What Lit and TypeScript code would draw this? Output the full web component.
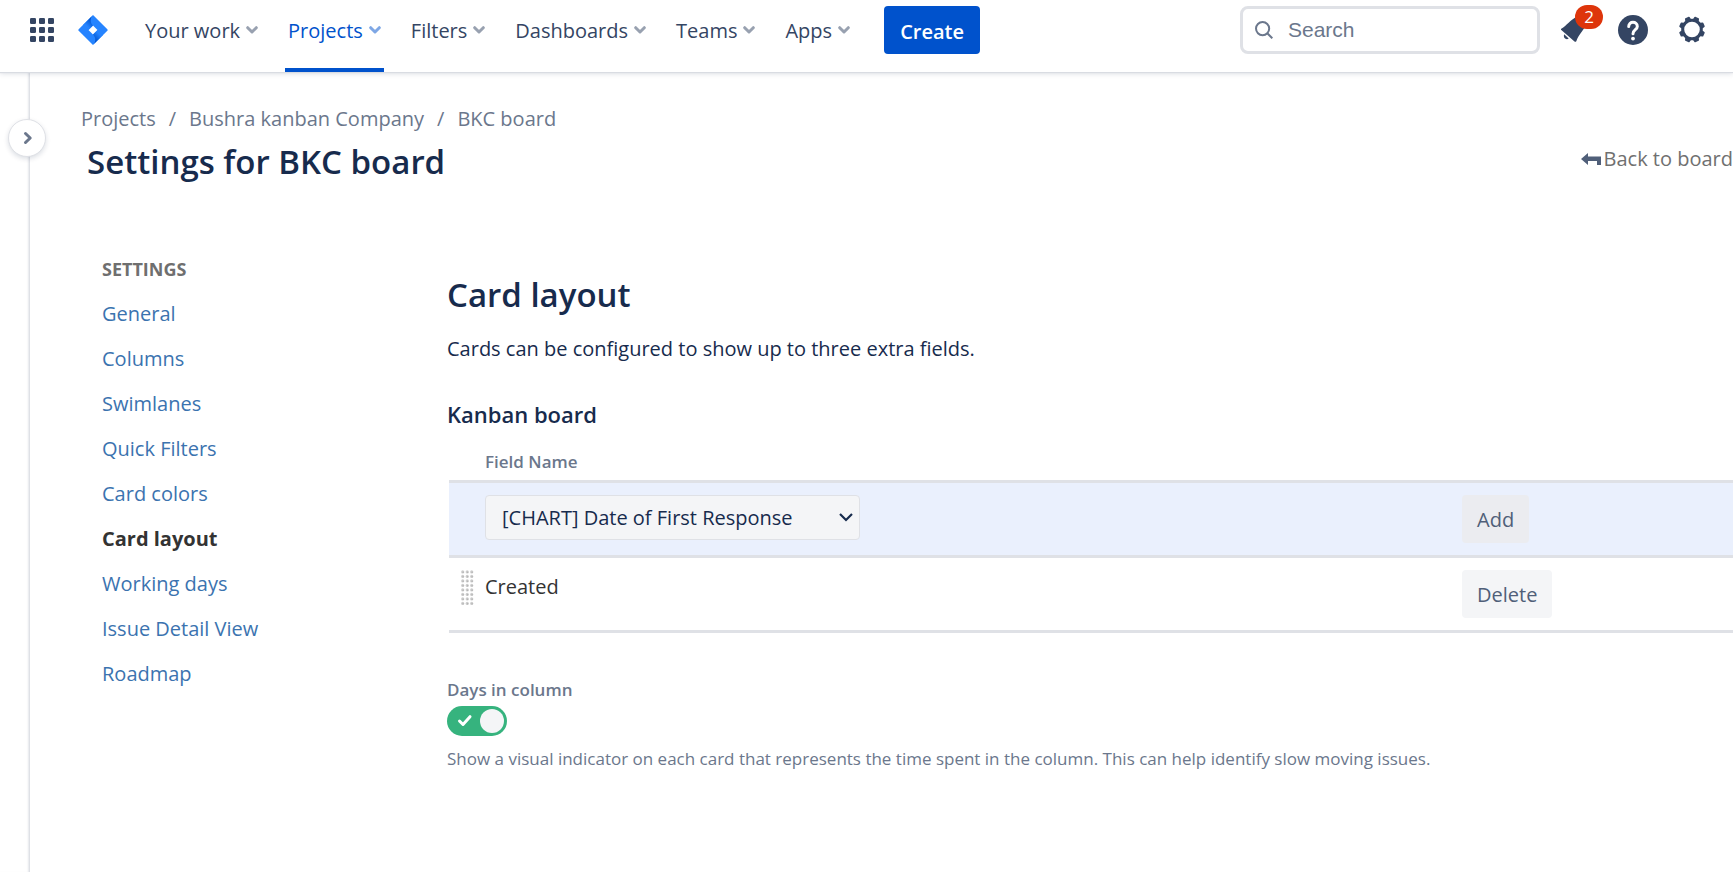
import { LitElement, html, svg, css } from "lit";
import { customElement, property, state } from "lit/decorators.js";
import { classMap } from "lit/directives/class-map.js";

const chevron = html`<svg class="chevron" width="12" height="8" viewBox="0 0 12 8" aria-hidden="true">
  <path d="M1.7 1.7 6 6 10.3 1.7" fill="none" stroke="currentColor" stroke-width="3" stroke-linecap="round" stroke-linejoin="round" />
</svg>`;

@customElement("top-bar")
export class TopBar extends LitElement {
  @property() active = "Projects";

  static styles = css`
    :host {
      display: block;
      position: relative;
      z-index: 2;
    }
    .bar {
      display: flex;
      align-items: flex-start;
      height: 72px;
      padding: 0 26px 0 27px;
      box-sizing: border-box;
      background: #fff;
      box-shadow: 0 1px 1px #d9dce2, 0 2px 5px rgba(9, 30, 66, 0.13);
    }
    button,
    a {
      font: inherit;
      color: #344563;
    }
    button {
      border: 0;
      background: none;
      padding: 0;
      cursor: pointer;
    }
    svg {
      display: block;
    }
    .switcher {
      margin: 15px 21px 0 0;
    }
    .logo {
      margin: 15px 34px 0 0;
    }
    .menu {
      display: flex;
      gap: 24px;
      height: 72px;
    }
    .item {
      display: flex;
      align-items: center;
      gap: 6px;
      padding: 0 3px 8px;
      border-bottom: 4px solid transparent;
      border-radius: 2px 2px 0 0;
      font-weight: 500;
      white-space: nowrap;
    }
    .item .chevron {
      opacity: 0.5;
    }
    .item.active {
      color: #0052cc;
      border-bottom-color: #0052cc;
    }
    .create {
      height: 48px;
      margin: 6px 0 0 31px;
      padding: 2px 16px 0;
      border-radius: 4px;
      background: #0052cc;
      color: #fff;
      font-weight: 600;
    }
    .search {
      display: flex;
      align-items: center;
      gap: 15px;
      width: 300px;
      height: 48px;
      margin: 6px 21px 0 auto;
      padding: 0 12px;
      box-sizing: border-box;
      border: 3px solid #dfe1e6;
      border-radius: 8px;
      color: #6b778c;
    }
    .search input {
      flex: 1;
      min-width: 0;
      border: 0;
      padding: 0;
      outline: 0;
      background: none;
      font: 21px "Liberation Sans", Arial, sans-serif;
      color: #172b4d;
    }
    .search input::placeholder {
      color: #6b778c;
      opacity: 1;
    }
    .tools {
      display: flex;
      margin-top: 15px;
    }
    .bell {
      position: relative;
      width: 30px;
      height: 30px;
      margin-right: 27px;
    }
    .badge {
      position: absolute;
      left: 14px;
      top: -10px;
      width: 28px;
      height: 24px;
      border-radius: 12px;
      background: #de350b;
      color: #fff;
      font-size: 17px;
      line-height: 24px;
      text-align: center;
    }
    .help {
      margin-right: 29px;
    }
  `;

  render() {
    const cells = [3, 12, 21];
    const items = ["Your work", "Projects", "Filters", "Dashboards", "Teams", "Apps"];
    return html`<header class="bar">
      <button class="switcher" aria-label="Switch to">
        <svg width="30" height="30" viewBox="0 0 30 30" fill="#344563">
          ${cells.map((y) => cells.map((x) => svg`<rect x=${x} y=${y} width="6" height="6" rx="1.3" />`))}
        </svg>
      </button>
      <a class="logo" href="#" aria-label="Jira">
        <svg width="30" height="30" viewBox="0 0 30 30">
          <defs>
            <linearGradient id="upper" x1="15" y1="5" x2="9" y2="11" gradientUnits="userSpaceOnUse">
              <stop offset="0.1" stop-color="#0052cc" /><stop offset="1" stop-color="#2684ff" />
            </linearGradient>
            <linearGradient id="lower" x1="15" y1="25" x2="21" y2="19" gradientUnits="userSpaceOnUse">
              <stop offset="0.1" stop-color="#0052cc" /><stop offset="1" stop-color="#2684ff" />
            </linearGradient>
          </defs>
          <path fill="#2684ff" fill-rule="evenodd" d="M15 0 29.3 14.2a1.1 1.1 0 0 1 0 1.6L15 30 .7 15.8a1.1 1.1 0 0 1 0-1.6ZM15 10.5 10.5 15 15 19.5 19.5 15Z" />
          <path fill="url(#upper)" d="M15 10.5C12 7.5 12 3.2 14.6.4L5 10l5.500 5Z" />
          <path fill="url(#lower)" d="M15 19.500c3 3 3 7.300.4 10.100L25 20l-5.500-5Z" />
        </svg>
      </a>
      <nav class="menu">
        ${items.map(
          (name) => html`<button class=${classMap({ item: true, active: name === this.active })} @click=${() => (this.active = name)}>
            ${name}${chevron}
          </button>`
        )}
      </nav>
      <button class="create">Create</button>
      <label class="search">
        <svg width="18" height="18" viewBox="0 0 18 18" fill="none" stroke="currentColor" stroke-width="2" aria-hidden="true">
          <circle cx="7.600" cy="7.600" r="6.600" /><path d="m12.300 12.300 5 5" />
        </svg>
        <input type="search" placeholder="Search" aria-label="Search" />
      </label>
      <div class="tools">
        <button class="bell" aria-label="Notifications">
          <svg width="30" height="30" viewBox="0 0 30 30" fill="#344563">
            <path d="M.2 13.700C6 10.500 9 5 16 1.500l9 9C21 17 17.500 20 15.300 26.200q-.8 1.200-1.800.2L.3 15.100q-.7-.8-.1-1.400Z" />
            <path d="M3.200 19.200 7.700 23.600C4.800 25.400 1.800 22.400 3.200 19.200Z" />
          </svg>
          <span class="badge">2</span>
        </button>
        <button class="help" aria-label="Help">
          <svg width="30" height="30" viewBox="0 0 30 30">
            <circle cx="15" cy="15" r="15" fill="#344563" />
            <path d="M10.700 11.600C10.700 5.800 19.300 6 19.300 11.500 19.300 14.700 15 14.700 15 18.700" fill="none" stroke="#fff" stroke-width="3" stroke-linecap="round" />
            <circle cx="15" cy="23.600" r="1.900" fill="#fff" />
          </svg>
        </button>
        <button aria-label="Settings">
          <svg width="30" height="30" viewBox="0 0 30 30" fill="none" stroke="#344563">
            <circle cx="15" cy="14.500" r="9.300" stroke-width="3" />
            ${[22.5, 67.5, 112.5, 157.5, 202.5, 247.5, 292.5, 337.5].map(
              (a) => svg`<path d="M12.800 4.300 13.300 2.300h3.400l.5 2Z" fill="#344563" stroke-width="1.600" stroke-linejoin="round" transform="rotate(${a} 15 14.500)" />`
            )}
          </svg>
        </button>
      </div>
    </header>`;
  }
}

@customElement("settings-nav")
export class SettingsNav extends LitElement {
  @property() current = "Card layout";

  static styles = css`
    :host {
      display: block;
    }
    h2 {
      margin: 0;
      font-size: 18px;
      line-height: 44px;
      font-weight: 700;
      color: #6f6f6f;
      text-transform: uppercase;
    }
    ul {
      margin: 0;
      padding: 0;
      list-style: none;
    }
    a {
      display: block;
      line-height: 45px;
      color: #3b73af;
      text-decoration: none;
    }
    a.current {
      color: #333;
      font-weight: 700;
    }
  `;

  render() {
    const pages = ["General", "Columns", "Swimlanes", "Quick Filters", "Card colors", "Card layout", "Working days", "Issue Detail View", "Roadmap"];
    return html`<nav aria-label="Settings">
      <h2>Settings</h2>
      <ul>
        ${pages.map((p) => html`<li><a href="#" class=${classMap({ current: p === this.current })}>${p}</a></li>`)}
      </ul>
    </nav>`;
  }
}

@customElement("card-layout")
export class CardLayout extends LitElement {
  @state() private daysInColumn = true;

  static styles = css`
    :host {
      display: block;
      color: #172b4d;
    }
    h2 {
      margin: 0;
      font-size: 33px;
      line-height: 48px;
      font-weight: 600;
    }
    p {
      margin: 0;
    }
    .intro {
      margin-top: 15px;
      line-height: 30px;
    }
    h3 {
      margin: 34px 0 0;
      font-size: 22px;
      line-height: 32px;
      font-weight: 600;
    }
    table {
      width: calc(100% - 2px);
      margin: 18px 0 0 2px;
      border-collapse: collapse;
      table-layout: fixed;
    }
    th {
      height: 27px;
      padding: 0 0 5px;
      text-align: left;
      font-size: 17px;
      line-height: 24px;
      font-weight: 600;
      color: #6b778c;
    }
    td {
      height: 48px;
      padding: 12px 0;
      border-top: 3px solid #dfe1e6;
      border-bottom: 3px solid #dfe1e6;
      vertical-align: top;
    }
    .grip-col {
      width: 36px;
    }
    .action-col {
      width: 271px;
    }
    .adding {
      background: #eaf0fd;
    }
    .picker {
      display: grid;
      width: 375px;
    }
    .picker > * {
      grid-area: 1 / 1;
    }
    .picker svg {
      place-self: center end;
      margin-right: 7px;
      pointer-events: none;
    }
    select {
      appearance: none;
      height: 45px;
      padding: 0 36px 0 16px;
      border: 1px solid #dfe1e6;
      border-radius: 4px;
      background: #f4f5f7;
      font: inherit;
      color: #172b4d;
    }
    .action {
      display: block;
      height: 48px;
      padding: 0 15px;
      border: 0;
      border-radius: 4px;
      background: #f4f5f7;
      font: inherit;
      color: #505f79;
    }
    .adding .action {
      background: #ebecf0;
    }
    .grip {
      display: block;
      margin-left: 12px;
    }
    .name {
      line-height: 34px;
      color: #333;
    }
    .toggle-label {
      display: block;
      margin-top: 45px;
      font-size: 17px;
      line-height: 24px;
      font-weight: 600;
      color: #6b778c;
    }
    .toggle {
      display: grid;
      width: 60px;
      height: 30px;
      margin-top: 4px;
    }
    .toggle > * {
      grid-area: 1 / 1;
    }
    .toggle input {
      appearance: none;
      width: 60px;
      height: 30px;
      margin: 0;
      border-radius: 15px;
      background: #6b778c;
    }
    .toggle input:checked {
      background: #36b37e;
    }
    .toggle svg {
      pointer-events: none;
    }
    .hint {
      margin-top: 11px;
      font-size: 17px;
      line-height: 24px;
      color: #6b778c;
    }
  `;

  render() {
    const rows = [0, 1, 2, 3, 4, 5, 6, 7];
    return html`
      <h2>Card layout</h2>
      <p class="intro">Cards can be configured to show up to three extra fields.</p>
      <h3>Kanban board</h3>
      <table>
        <colgroup><col class="grip-col" /><col /><col class="action-col" /></colgroup>
        <thead>
          <tr><th></th><th>Field Name</th><th></th></tr>
        </thead>
        <tbody>
          <tr class="adding">
            <td></td>
            <td>
              <div class="picker">
                <select aria-label="Field name"><option>[CHART] Date of First Response</option></select>
                <svg width="14" height="9" viewBox="0 0 14 9" fill="none" stroke="#172b4d" stroke-width="2.200" aria-hidden="true">
                  <path d="m1 1 6 6 6-6" />
                </svg>
              </div>
            </td>
            <td><button class="action">Add</button></td>
          </tr>
          <tr>
            <td>
              <svg class="grip" width="13" height="36" viewBox="0 0 13 36" aria-hidden="true">
                ${rows.map((r) =>
                  [0, 1, 2].map(
                    (c) => svg`<circle cx=${1.7 + c * 4.5} cy=${1.9 + r * 4.5} r="1.600" fill="#cecece" /><circle cx=${2.1 + c * 4.5} cy=${2.3 + r * 4.5} r="0.800" fill="#b4b4b4" />`
                  )
                )}
              </svg>
            </td>
            <td class="name">Created</td>
            <td><button class="action">Delete</button></td>
          </tr>
        </tbody>
      </table>
      <label class="toggle-label" for="days">Days in column</label>
      <div class="toggle">
        <input id="days" type="checkbox" .checked=${this.daysInColumn} @change=${() => (this.daysInColumn = !this.daysInColumn)} />
        <svg width="60" height="30" viewBox="0 0 60 30" aria-hidden="true">
          ${this.daysInColumn
            ? svg`<path d="m12.500 15 3.500 3.500 7-7.800" fill="none" stroke="#fff" stroke-width="3" stroke-linecap="round" stroke-linejoin="round" /><circle cx="45" cy="15" r="12" fill="#f4f5f7" />`
            : svg`<circle cx="15" cy="15" r="12" fill="#f4f5f7" />`}
        </svg>
      </div>
      <p class="hint">
        Show a visual indicator on each card that represents the time spent in the column. This can help identify slow moving issues.
      </p>
    `;
  }
}

@customElement("app-root")
export class AppRoot extends LitElement {
  static styles = css`
    :host {
      display: flex;
      flex-direction: column;
      min-height: 100vh;
      overflow: hidden;
      background: #fff;
      font-family: "Open Sans", "Noto Sans", sans-serif;
      font-size: 20px;
      color: #172b4d;
    }
    .body {
      display: flex;
      flex: 1;
    }
    .rail {
      position: relative;
      width: 29px;
      flex: none;
      border-right: 1px solid #dfe1e6;
      box-shadow: inset -2px 0 2px -1px rgba(9, 30, 66, 0.1);
    }
    .expand {
      position: absolute;
      top: 47px;
      left: 8px;
      display: grid;
      place-items: center;
      width: 38px;
      height: 38px;
      padding: 0 0 0 1px;
      border: 1px solid #dfe1e6;
      border-radius: 50%;
      background: #fff;
      box-shadow: 0 2px 5px rgba(9, 30, 66, 0.14);
      color: #6b778c;
    }
    main {
      flex: 1;
      min-width: 0;
      padding-left: 51px;
    }
    .crumbs {
      display: flex;
      gap: 13px;
      margin-top: 33px;
      line-height: 28px;
      color: #6b778c;
    }
    a {
      color: inherit;
      text-decoration: none;
    }
    .heading {
      display: flex;
      justify-content: space-between;
      align-items: center;
      margin-left: 6px;
      height: 57px;
    }
    h1 {
      margin: 0;
      font-size: 33px;
      line-height: 48px;
      font-weight: 600;
    }
    .back {
      display: flex;
      align-items: center;
      gap: 3px;
      color: #707070;
      white-space: nowrap;
      padding-bottom: 6px;
    }
    .columns {
      display: grid;
      grid-template-columns: 345px minmax(0, 1fr);
      margin-left: 21px;
      padding-top: 57px;
    }
    card-layout {
      padding-top: 24px;
    }
  `;

  render() {
    return html`
      <top-bar></top-bar>
      <div class="body">
        <div class="rail">
          <button class="expand" aria-label="Expand sidebar">
            <svg width="10" height="14" viewBox="0 0 10 14" fill="none" stroke="currentColor" stroke-width="3" stroke-linecap="round" stroke-linejoin="round">
              <path d="m2.500 2.500 4.700 4.500-4.700 4.500" />
            </svg>
          </button>
        </div>
        <main>
          <nav class="crumbs" aria-label="Breadcrumb">
            <a href="#">Projects</a><span>/</span><a href="#">Bushra kanban Company</a><span>/</span><a href="#">BKC board</a>
          </nav>
          <div class="heading">
            <h1>Settings for BKC board</h1>
            <a class="back" href="#">
              <svg width="20" height="14" viewBox="0 0 20 14" fill="#505f79" aria-hidden="true"><path d="M0 7 7 1V4.500H20V13H16V9H7V13Z" /></svg>
              Back to board
            </a>
          </div>
          <div class="columns">
            <settings-nav></settings-nav>
            <card-layout></card-layout>
          </div>
        </main>
      </div>
    `;
  }
}
